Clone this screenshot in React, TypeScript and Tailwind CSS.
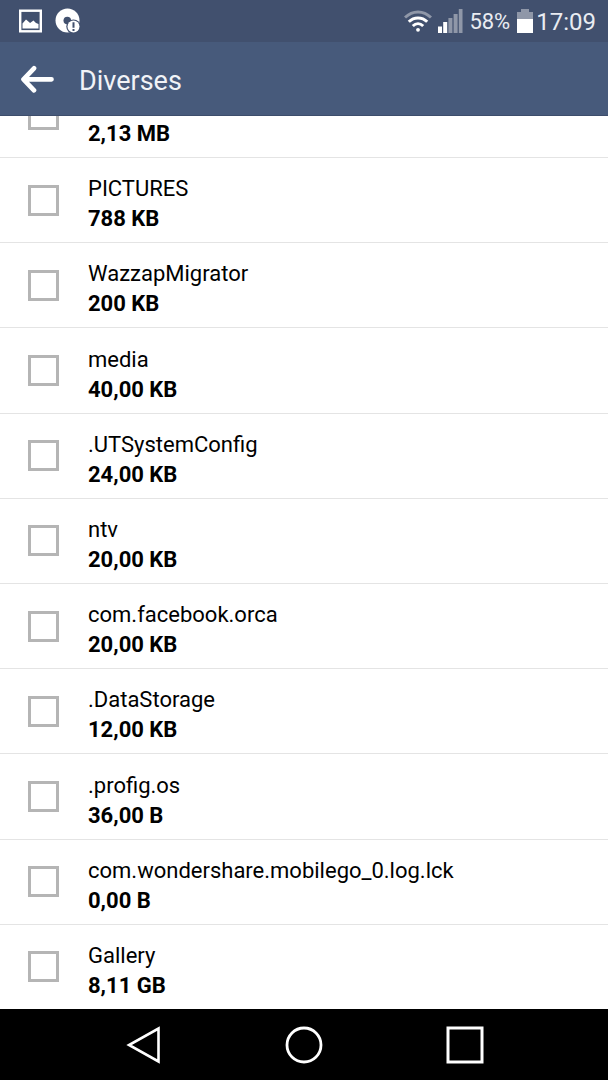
import { useState } from 'react'

interface Entry { name: string; size: string }

const entries: Entry[] = [
  { name: 'PICTURES', size: '788 KB' },
  { name: 'WazzapMigrator', size: '200 KB' },
  { name: 'media', size: '40,00 KB' },
  { name: '.UTSystemConfig', size: '24,00 KB' },
  { name: 'ntv', size: '20,00 KB' },
  { name: 'com.facebook.orca', size: '20,00 KB' },
  { name: '.DataStorage', size: '12,00 KB' },
  { name: '.profig.os', size: '36,00 B' },
  { name: 'com.wondershare.mobilego_0.log.lck', size: '0,00 B' },
  { name: 'Gallery', size: '8,11 GB' },
]

const checkbox = 'size-[31px] shrink-0 appearance-none border-3 border-[#b5b5b5] bg-white checked:bg-[#475a7b]'

function StatusBar() {
  return (
    <div className="flex h-[42px] shrink-0 items-center bg-[#41506e] pl-[18px] pr-3 text-[#e9ecf2]">
      <svg className="size-6" viewBox="0 0 24 24" fill="none">
        <rect x="2.200" y="1.700" width="20.600" height="20.600" stroke="#fff" strokeWidth="2.400" />
        <path d="M4.500 19.500v-5l3.500-4 3 2.500 1 1 3.500-2.500 2.500 2.500 2.500 1v4.500z" fill="#fff" />
      </svg>
      <svg className="ml-3 size-7" viewBox="0 0 28 28">
        <circle cx="13.500" cy="13.500" r="12" fill="#fff" />
        <circle cx="13.300" cy="13.500" r="3.800" fill="#41506e" />
        <circle cx="19.500" cy="19.600" r="7.200" fill="#41506e" />
        <circle cx="19.500" cy="19.600" r="6" fill="#fff" />
        <path d="M19.500 15.300v5.400M19.500 22v2.100" stroke="#41506e" strokeWidth="2" />
      </svg>
      <div className="ml-auto flex items-center">
        <svg className="h-6 w-7" viewBox="0 0 28 24" fill="none" strokeWidth="3">
          <path d="M1 8.500C8.500 1 19.500 1 27 8.500" stroke="#8f97a8" />
          <path d="M4.800 12.800C10 7.600 18 7.600 23.200 12.800" stroke="#fff" />
          <path d="M8.800 17C12 13.900 16 13.900 19.200 17" stroke="#fff" />
          <circle cx="14" cy="20.800" r="1.900" fill="#fff" />
        </svg>
        <svg className="ml-[6px] h-6 w-[25px]" viewBox="0 0 25 24">
          <path d="M0 17.500h4V24H0zM5.200 13h4v11h-4z" fill="#fff" />
          <path d="M10.400 9h4v15h-4zM15.600 5h4v19h-4zM20.800 0h3.700v24h-3.700z" fill="#8f97a8" />
        </svg>
        <span className="ml-[6px] pt-[2px] text-[22px] leading-6">58%</span>
        <svg className="ml-[7px] h-6 w-4" viewBox="0 0 16 24">
          <path d="M0 3h4V0h8v3h4v8H0z" fill="#8f97a8" />
          <path d="M0 10h16v14H0z" fill="#fff" />
        </svg>
        <span className="ml-[3px] pt-[2px] text-2xl leading-6">17:09</span>
      </div>
    </div>
  )
}

function NavBar() {
  return (
    <nav className="flex h-[71px] shrink-0 items-center justify-center gap-[123px] bg-black">
      <button type="button" aria-label="Zurück">
        <svg className="size-[38px]" viewBox="0 0 38 38" fill="none" stroke="#fff" strokeWidth="2.600">
          <path d="M34.500 2.500v33L5 19z" />
        </svg>
      </button>
      <button type="button" aria-label="Startseite">
        <svg className="size-[38px]" viewBox="0 0 38 38" fill="none" stroke="#fff" strokeWidth="2.800">
          <circle cx="19" cy="19" r="17" />
        </svg>
      </button>
      <button type="button" aria-label="Übersicht">
        <svg className="size-[38px]" viewBox="0 0 38 38" fill="none" stroke="#fff" strokeWidth="3">
          <rect x="2" y="2" width="34" height="34" />
        </svg>
      </button>
    </nav>
  )
}

export default function App() {
  const [selected, setSelected] = useState<string[]>([])

  const toggle = (name: string) =>
    setSelected(prev => (prev.includes(name) ? prev.filter(n => n !== name) : [...prev, name]))

  return (
    <div className="flex h-screen flex-col bg-white font-[Roboto,sans-serif] text-black">
      <StatusBar />
      <header className="flex h-[74px] shrink-0 items-center border-b border-[#3d4d6b] bg-[#475a7b] pl-5 text-white">
        <button type="button" aria-label="Zurück">
          <svg className="h-7 w-[34px]" viewBox="0 0 34 28" fill="none" stroke="#fff" strokeWidth="4.700" strokeLinecap="round" strokeLinejoin="round">
            <path d="M14 3.300L3.500 14.300L14 25.300M4 14.300h27.500" />
          </svg>
        </button>
        <h1 className="ml-[25px] pt-1 text-[27px] leading-8 text-[#f1f3f7]">Diverses</h1>
      </header>
      <ul className="flex min-h-0 flex-1 flex-col overflow-hidden text-[22px] leading-[30px]">
        {/* row scrolled halfway under the header */}
        <li className="flex h-[42px] shrink-0 items-end overflow-hidden border-b border-[#e4e4e4]">
          <label className="flex w-full items-end pl-7">
            <input type="checkbox" className={`${checkbox} mb-[27px]`} />
            <span className="ml-[29px] pb-2 font-bold">2,13 MB</span>
          </label>
        </li>
        {entries.map(entry => (
          <li key={entry.name} className="min-h-0 flex-1 border-b border-[#e4e4e4] last:border-b-0">
            <label className="flex h-full items-center pl-7">
              <input
                type="checkbox"
                className={checkbox}
                checked={selected.includes(entry.name)}
                onChange={() => toggle(entry.name)}
              />
              <span className="ml-[29px] flex flex-col pt-2">
                <span>{entry.name}</span>
                <span className="font-bold">{entry.size}</span>
              </span>
            </label>
          </li>
        ))}
      </ul>
      <NavBar />
    </div>
  )
}
